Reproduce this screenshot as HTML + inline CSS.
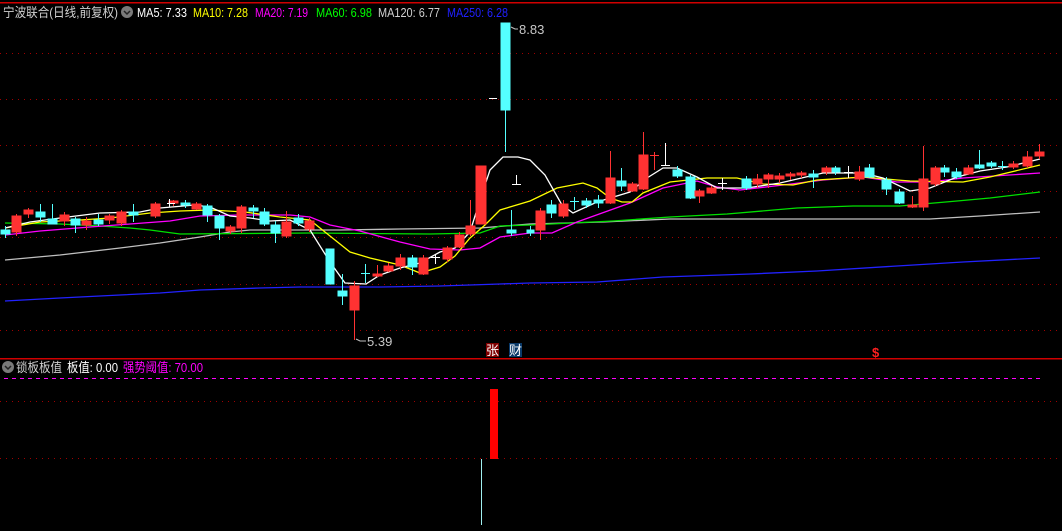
<!DOCTYPE html>
<html><head><meta charset="utf-8"><style>
html,body{margin:0;padding:0;background:#000;width:1062px;height:531px;overflow:hidden}
svg{display:block}
text{font-family:"Liberation Sans","Noto Sans CJK SC",sans-serif;font-size:13px}
</style></head><body>
<svg width="1062" height="531" viewBox="0 0 1062 531" xmlns="http://www.w3.org/2000/svg" shape-rendering="crispEdges">
<rect width="1062" height="531" fill="#000"/>
<line x1="0" y1="2.5" x2="1062" y2="2.5" stroke="#d00000" stroke-width="1.5"/>
<g stroke="#a00000" stroke-dasharray="1,5" stroke-width="1">
<line x1="0" y1="53.5" x2="1062" y2="53.5"/><line x1="0" y1="99.5" x2="1062" y2="99.5"/>
<line x1="0" y1="145.5" x2="1062" y2="145.5"/><line x1="0" y1="191.5" x2="1062" y2="191.5"/>
<line x1="0" y1="237.5" x2="1062" y2="237.5"/><line x1="0" y1="284.5" x2="1062" y2="284.5"/>
<line x1="0" y1="330.5" x2="1062" y2="330.5"/>
<line x1="0" y1="401.5" x2="1062" y2="401.5"/><line x1="0" y1="458.5" x2="1062" y2="458.5"/>
</g>
<line x1="0" y1="358.5" x2="1062" y2="358.5" stroke="#d00000" stroke-width="1.5"/>
<line x1="4" y1="378.5" x2="1040" y2="378.5" stroke="#ff00ff" stroke-dasharray="4,4" stroke-width="1"/>

<g fill="none" stroke-width="1.3" shape-rendering="auto">
<polyline stroke="#2222ff" points="5,301 60,298 120,295 160,293 200,290 260,288 300,287 380,287 440,286 500,284 530,283 597,282 663,277 750,274 817,271 897,266 963,262 1040,258"/>
<polyline stroke="#c0c0c0" points="5,260 60,255 120,248 160,243 200,237 230,232 250,230 340,230 400,229 480,228 530,224 603,222 670,219 853,219 930,219 980,216 1040,212"/>
<polyline stroke="#00e000" points="5,223 60,224 100,226 130,228 150,230 180,234 310,233 430,234 480,233 500,226 530,225 613,221 670,217 727,214 797,208 853,206 900,206 957,201 990,198 1040,192"/>
<polyline stroke="#ff00ff" points="5,235 40,231 90,227 130,224 170,221 200,216 240,215 290,215 310,217 330,225 360,231 400,242 430,249 460,250 480,248 500,237 530,233 552,233 577,222 630,203 663,188 697,181 717,187 740,190 783,185 823,180 863,177 897,182 930,182 963,178 1040,173"/>
<polyline stroke="#ffff00" points="5,228 40,222 80,220 110,218 150,213 180,211 210,210 245,212 280,217 310,220 330,236 350,252 370,258 400,265 420,273 440,267 455,256 470,238 485,225 500,210 530,201 557,188 583,183 597,188 610,198 622,202 632,202 643,193 670,182 707,178 737,178 763,184 793,185 817,180 863,177 897,180 910,181 963,182 990,177 1040,165"/>
<polyline stroke="#ffffff" points="5,228 30,222 60,218 100,213 140,212 160,208 195,205 210,207 230,216 250,218 270,221 290,220 310,230 330,262 345,283 366,284 380,275 400,268 420,263 440,252 455,248 470,232 480,200 490,170 503,157 518,157 530,160 545,175 562,205 573,213 597,202 630,192 647,178 663,168 677,168 697,177 717,188 747,188 780,183 823,173 863,173 883,178 910,191 930,188 957,177 980,171 1007,167 1040,159"/>
</g>

<g stroke-width="1">
<g stroke="#54ffff" fill="#54ffff">
<line x1="5.5" y1="226" x2="5.5" y2="238"/><rect x="1" y="230" width="9" height="4"/>
<line x1="40.5" y1="204" x2="40.5" y2="222"/><rect x="36" y="212" width="9" height="5"/>
<line x1="52.5" y1="204" x2="52.5" y2="222"/><rect x="48" y="219" width="9" height="5"/>
<line x1="75.5" y1="217" x2="75.5" y2="233"/><rect x="71" y="219" width="9" height="6"/>
<line x1="98.5" y1="214" x2="98.5" y2="226"/><rect x="94" y="220" width="9" height="4"/>
<line x1="133.5" y1="204" x2="133.5" y2="222"/><rect x="129" y="212" width="9" height="3"/>
<line x1="185.5" y1="200" x2="185.5" y2="208"/><rect x="181" y="203" width="9" height="2"/>
<line x1="207.5" y1="204" x2="207.5" y2="222"/><rect x="203" y="206" width="9" height="9"/>
<line x1="219.5" y1="214" x2="219.5" y2="240"/><rect x="215" y="216" width="9" height="12"/>
<line x1="253.5" y1="205" x2="253.5" y2="218"/><rect x="249" y="208" width="9" height="3"/>
<line x1="264.5" y1="208" x2="264.5" y2="226"/><rect x="260" y="212" width="9" height="12"/>
<line x1="275.5" y1="221" x2="275.5" y2="243"/><rect x="271" y="225" width="9" height="8"/>
<line x1="298.5" y1="214" x2="298.5" y2="226"/><rect x="294" y="218" width="9" height="5"/>
<rect x="326" y="249" width="8" height="35"/>
<line x1="342.5" y1="274" x2="342.5" y2="305"/><rect x="338" y="291" width="9" height="5"/>
<line x1="365.5" y1="264" x2="365.5" y2="283"/><line x1="361" y1="273.5" x2="370" y2="273.5"/>
<line x1="412.5" y1="255" x2="412.5" y2="275"/><rect x="408" y="258" width="9" height="9"/>
<line x1="505.5" y1="23" x2="505.5" y2="152"/><rect x="501" y="23" width="9" height="87"/>
<line x1="511.5" y1="210" x2="511.5" y2="236"/><rect x="507" y="230" width="9" height="3"/>
<line x1="530.5" y1="226" x2="530.5" y2="236"/><rect x="527" y="230" width="7" height="3"/>
<line x1="551.5" y1="200" x2="551.5" y2="218"/><rect x="547" y="205" width="9" height="8"/>
<line x1="574.5" y1="197" x2="574.5" y2="210"/><line x1="570" y1="201.5" x2="579" y2="201.5"/>
<line x1="586.5" y1="198" x2="586.5" y2="208"/><rect x="582" y="201" width="9" height="4"/>
<line x1="598.5" y1="195" x2="598.5" y2="208"/><rect x="594" y="200" width="9" height="3"/>
<line x1="621.5" y1="168" x2="621.5" y2="191"/><rect x="617" y="181" width="9" height="5"/>
<line x1="677.5" y1="166" x2="677.5" y2="178"/><rect x="673" y="170" width="9" height="6"/>
<line x1="690.5" y1="175" x2="690.5" y2="199"/><rect x="686" y="177" width="9" height="21"/>
<line x1="746.5" y1="176" x2="746.5" y2="190"/><rect x="742" y="179" width="9" height="9"/>
<line x1="813.5" y1="170" x2="813.5" y2="188"/><rect x="809" y="174" width="9" height="3"/>
<line x1="835.5" y1="166" x2="835.5" y2="175"/><rect x="831" y="168" width="9" height="4"/>
<line x1="869.5" y1="164" x2="869.5" y2="178"/><rect x="865" y="168" width="9" height="9"/>
<line x1="886.5" y1="177" x2="886.5" y2="195"/><rect x="882" y="180" width="9" height="9"/>
<line x1="899.5" y1="189" x2="899.5" y2="204"/><rect x="895" y="192" width="9" height="11"/>
<line x1="944.5" y1="165" x2="944.5" y2="177"/><rect x="940" y="168" width="9" height="4"/>
<line x1="956.5" y1="168" x2="956.5" y2="179"/><rect x="952" y="172" width="9" height="5"/>
<line x1="979.5" y1="150" x2="979.5" y2="169"/><rect x="975" y="165" width="9" height="3"/>
<line x1="991.5" y1="161" x2="991.5" y2="168"/><rect x="987" y="163" width="9" height="3"/>
<line x1="1002.5" y1="161" x2="1002.5" y2="170"/><line x1="998" y1="166.5" x2="1007" y2="166.5"/>
</g>
<g stroke="#ff3232" fill="#ff3232">
<line x1="16.5" y1="214" x2="16.5" y2="236"/><rect x="12" y="216" width="9" height="16"/>
<line x1="28.5" y1="208" x2="28.5" y2="218"/><rect x="24" y="210" width="9" height="4"/>
<line x1="64.5" y1="212" x2="64.5" y2="226"/><rect x="60" y="215" width="9" height="6"/>
<line x1="86.5" y1="217" x2="86.5" y2="230"/><rect x="82" y="221" width="9" height="4"/>
<line x1="109.5" y1="214" x2="109.5" y2="224"/><rect x="105" y="216" width="9" height="4"/>
<line x1="121.5" y1="210" x2="121.5" y2="226"/><rect x="117" y="212" width="9" height="11"/>
<line x1="155.5" y1="202" x2="155.5" y2="218"/><rect x="151" y="204" width="9" height="12"/>
<line x1="173.5" y1="200" x2="173.5" y2="206"/><rect x="169" y="201" width="9" height="2"/>
<line x1="196.5" y1="202" x2="196.5" y2="210"/><rect x="192" y="204" width="9" height="5"/>
<line x1="230.5" y1="225" x2="230.5" y2="234"/><rect x="226" y="227" width="9" height="4"/>
<line x1="241.5" y1="205" x2="241.5" y2="233"/><rect x="237" y="207" width="9" height="21"/>
<line x1="286.5" y1="211" x2="286.5" y2="238"/><rect x="282" y="222" width="9" height="14"/>
<line x1="309.5" y1="218" x2="309.5" y2="232"/><rect x="305" y="221" width="9" height="8"/>
<line x1="354.5" y1="281" x2="354.5" y2="340"/><rect x="350" y="286" width="9" height="24"/>
<line x1="377.5" y1="265" x2="377.5" y2="277"/><rect x="373" y="274" width="9" height="2"/>
<line x1="388.5" y1="263" x2="388.5" y2="272"/><rect x="384" y="266" width="9" height="5"/>
<line x1="400.5" y1="254" x2="400.5" y2="270"/><rect x="396" y="258" width="9" height="8"/>
<line x1="423.5" y1="255" x2="423.5" y2="275"/><rect x="419" y="258" width="9" height="16"/>
<line x1="447.5" y1="246" x2="447.5" y2="262"/><rect x="443" y="248" width="9" height="11"/>
<line x1="459.5" y1="232" x2="459.5" y2="248"/><rect x="455" y="235" width="9" height="12"/>
<line x1="470.5" y1="200" x2="470.5" y2="236"/><rect x="466" y="226" width="9" height="8"/>
<rect x="476" y="166" width="10" height="58"/>
<line x1="540.5" y1="208" x2="540.5" y2="240"/><rect x="536" y="211" width="9" height="19"/>
<line x1="563.5" y1="200" x2="563.5" y2="218"/><rect x="559" y="204" width="9" height="12"/>
<line x1="610.5" y1="151" x2="610.5" y2="204"/><rect x="606" y="178" width="9" height="25"/>
<line x1="632.5" y1="182" x2="632.5" y2="192"/><rect x="628" y="184" width="9" height="7"/>
<line x1="643.5" y1="132" x2="643.5" y2="190"/><rect x="639" y="155" width="9" height="34"/>
<line x1="654.5" y1="152" x2="654.5" y2="170"/><line x1="650" y1="155.5" x2="659" y2="155.5"/>
<line x1="699.5" y1="189" x2="699.5" y2="203"/><rect x="695" y="191" width="9" height="5"/>
<line x1="711.5" y1="186" x2="711.5" y2="194"/><rect x="707" y="188" width="9" height="5"/>
<line x1="757.5" y1="174" x2="757.5" y2="188"/><rect x="753" y="179" width="9" height="5"/>
<line x1="768.5" y1="173" x2="768.5" y2="188"/><rect x="764" y="175" width="9" height="4"/>
<line x1="779.5" y1="173" x2="779.5" y2="183"/><rect x="775" y="176" width="9" height="3"/>
<line x1="790.5" y1="172" x2="790.5" y2="180"/><rect x="786" y="174" width="9" height="2"/>
<line x1="801.5" y1="171" x2="801.5" y2="178"/><rect x="797" y="173" width="9" height="2"/>
<line x1="826.5" y1="166" x2="826.5" y2="175"/><rect x="822" y="168" width="9" height="4"/>
<line x1="859.5" y1="166" x2="859.5" y2="181"/><rect x="855" y="172" width="9" height="7"/>
<line x1="912.5" y1="196" x2="912.5" y2="208"/><rect x="908" y="205" width="9" height="2"/>
<line x1="923.5" y1="146" x2="923.5" y2="211"/><rect x="919" y="179" width="9" height="28"/>
<line x1="935.5" y1="166" x2="935.5" y2="186"/><rect x="931" y="168" width="9" height="16"/>
<line x1="968.5" y1="165" x2="968.5" y2="175"/><rect x="964" y="168" width="9" height="6"/>
<line x1="1013.5" y1="161" x2="1013.5" y2="169"/><rect x="1009" y="164" width="9" height="3"/>
<line x1="1027.5" y1="151" x2="1027.5" y2="168"/><rect x="1023" y="157" width="9" height="9"/>
<line x1="1039.5" y1="144" x2="1039.5" y2="159"/><rect x="1035" y="152" width="9" height="4"/>
</g>
<g stroke="#fff">
<line x1="167" y1="203.5" x2="175" y2="203.5"/><line x1="169.5" y1="199" x2="169.5" y2="207"/>
<line x1="431" y1="257.5" x2="440" y2="257.5"/><line x1="435.5" y1="254" x2="435.5" y2="264"/>
<line x1="489" y1="98.5" x2="497" y2="98.5"/>
<line x1="516.5" y1="175" x2="516.5" y2="184"/><line x1="512" y1="184.5" x2="521" y2="184.5"/>
<line x1="665.5" y1="143" x2="665.5" y2="165"/><line x1="661" y1="165.5" x2="670" y2="165.5"/>
<line x1="722.5" y1="178" x2="722.5" y2="190"/><line x1="718" y1="183.5" x2="727" y2="183.5"/>
<line x1="848.5" y1="166" x2="848.5" y2="178"/><line x1="844" y1="172.5" x2="853" y2="172.5"/>
</g>
</g>

<g stroke="#c0c0c0" fill="none" shape-rendering="auto">
<polyline points="511,27 515,29 518,29"/><polyline points="356,339 360,341 366,341"/>
</g>
<text x="519" y="34" fill="#c8c8c8" font-size="12">8.83</text>
<text x="367" y="346" fill="#c8c8c8" font-size="12">5.39</text>
<rect x="486" y="343" width="13" height="14" fill="#800000"/>
<text x="486" y="355" fill="#fff" font-size="12">张</text>
<rect x="509" y="343" width="13" height="14" fill="#0a3a6a"/>
<text x="509" y="355" fill="#fff" font-size="12">财</text>
<text x="872" y="357" fill="#ff2020" font-size="13" font-weight="bold">$</text>

<rect x="490" y="389" width="8" height="70" fill="#ff0000"/>
<line x1="481.5" y1="459" x2="481.5" y2="525" stroke="#a0f0f0"/>

<text x="3" y="17" fill="#d0d0d0" font-size="14" textLength="115" lengthAdjust="spacingAndGlyphs">宁波联合(日线,前复权)</text>
<g shape-rendering="auto"><circle cx="127" cy="12" r="6" fill="#7a7a7a"/><polyline points="124,11 127,14 130,11" fill="none" stroke="#222" stroke-width="1.5"/></g>
<text x="137" y="17" fill="#fff" textLength="50" lengthAdjust="spacingAndGlyphs">MA5: 7.33</text>
<text x="193" y="17" fill="#ffff00" textLength="55" lengthAdjust="spacingAndGlyphs">MA10: 7.28</text>
<text x="255" y="17" fill="#ff00ff" textLength="53" lengthAdjust="spacingAndGlyphs">MA20: 7.19</text>
<text x="316" y="17" fill="#00ff00" textLength="56" lengthAdjust="spacingAndGlyphs">MA60: 6.98</text>
<text x="378" y="17" fill="#d0d0d0" textLength="62" lengthAdjust="spacingAndGlyphs">MA120: 6.77</text>
<text x="447" y="17" fill="#2020ff" textLength="61" lengthAdjust="spacingAndGlyphs">MA250: 6.28</text>

<g shape-rendering="auto"><circle cx="8" cy="367" r="6" fill="#7a7a7a"/><polyline points="5,366 8,369 11,366" fill="none" stroke="#222" stroke-width="1.5"/></g>
<text x="16" y="372" fill="#d0d0d0" font-size="14" textLength="46" lengthAdjust="spacingAndGlyphs">锁板板值</text>
<text x="67" y="372" fill="#fff" font-size="13" textLength="51" lengthAdjust="spacingAndGlyphs">板值: 0.00</text>
<text x="123" y="372" fill="#ff00ff" font-size="13" textLength="80" lengthAdjust="spacingAndGlyphs">强势阈值: 70.00</text>
</svg>
</body></html>
